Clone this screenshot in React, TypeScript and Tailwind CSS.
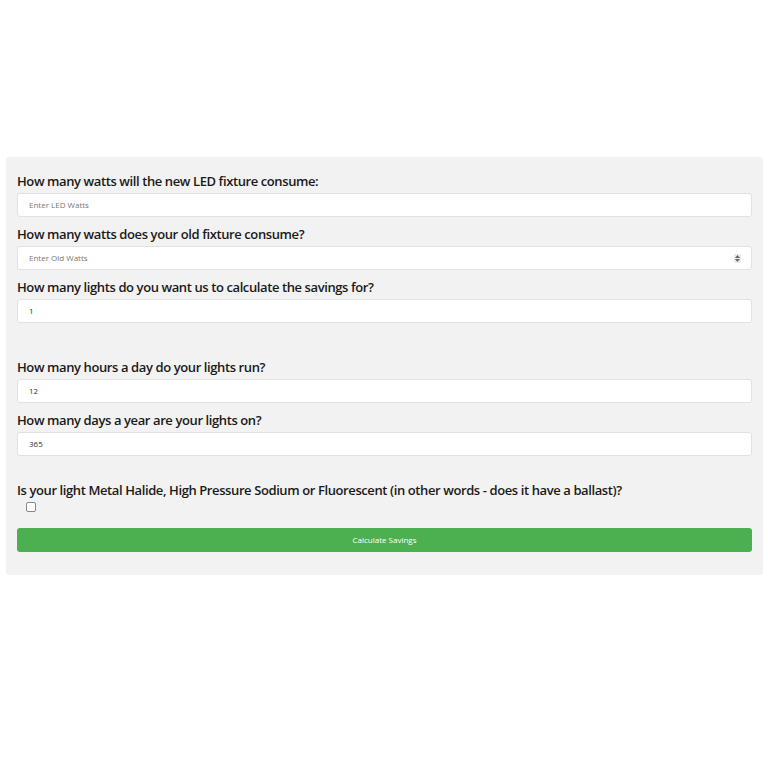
import React from "react";

const font = { fontFamily: '"Open Sans", "Liberation Sans", sans-serif' };

function Label({ children }: { children: React.ReactNode }) {
  return (
    <div className="h-5 mb-[2px] text-[13px] tracking-[-0.4px] leading-5 font-semibold text-[#1a1a1a]">{children}</div>
  );
}

function Field({ text, placeholder, spinner }: { text?: string; placeholder?: boolean; spinner?: boolean }) {
  return (
    <div className="h-6 bg-white border border-[#e2e2e2] rounded-[3px] flex items-center pl-[11px] pr-[10px]">
      <span className={"text-[8px] flex-1 " + (placeholder ? "text-[#777]" : "text-[#333]")}>{text}</span>
      {spinner && (
        <div className="w-[7px] h-[9px] bg-[#ececec] flex flex-col items-center justify-center gap-[1px]">
          <svg width="5" height="3" viewBox="0 0 5 3"><path d="M0 3L2.5 0L5 3Z" fill="#666" /></svg>
          <svg width="5" height="3" viewBox="0 0 5 3"><path d="M0 0L2.5 3L5 0Z" fill="#666" /></svg>
        </div>
      )}
    </div>
  );
}

export default function App() {
  return (
    <div className="w-[768px] h-[768px] bg-white" style={font}>
      <div className="pt-[157px] px-[6px]">
        <div className="w-[757px] bg-[#f2f2f2] rounded-[3px] pt-[14px] pb-[23px] px-[11px]">
          <Label>How many watts will the new LED fixture consume:</Label>
          <Field text="Enter LED Watts" placeholder />
          <div className="mt-[7px]">
            <Label>How many watts does your old fixture consume?</Label>
            <Field text="Enter Old Watts" placeholder spinner />
          </div>
          <div className="mt-[7px]">
            <Label>How many lights do you want us to calculate the savings for?</Label>
            <Field text="1" />
          </div>
          <div className="mt-[34px]">
            <Label>How many hours a day do your lights run?</Label>
            <Field text="12" />
          </div>
          <div className="mt-[7px]">
            <Label>How many days a year are your lights on?</Label>
            <Field text="365" />
          </div>
          <div className="mt-[24px]">
            <div className="h-5 text-[13px] tracking-[-0.4px] leading-5 font-semibold text-[#1a1a1a]">
              Is your light Metal Halide, High Pressure Sodium or Fluorescent (in other words - does it have a ballast)?
            </div>
            <div className="pl-[9px] pt-[2px]">
              <div className="w-[10px] h-[10px] bg-white border border-[#888] rounded-[2px]" />
            </div>
          </div>
          <div className="mt-[16px] h-6 bg-[#4caf50] rounded-[3px] flex items-center justify-center">
            <span className="text-[8px] text-white">Calculate Savings</span>
          </div>
        </div>
      </div>
    </div>
  );
}
